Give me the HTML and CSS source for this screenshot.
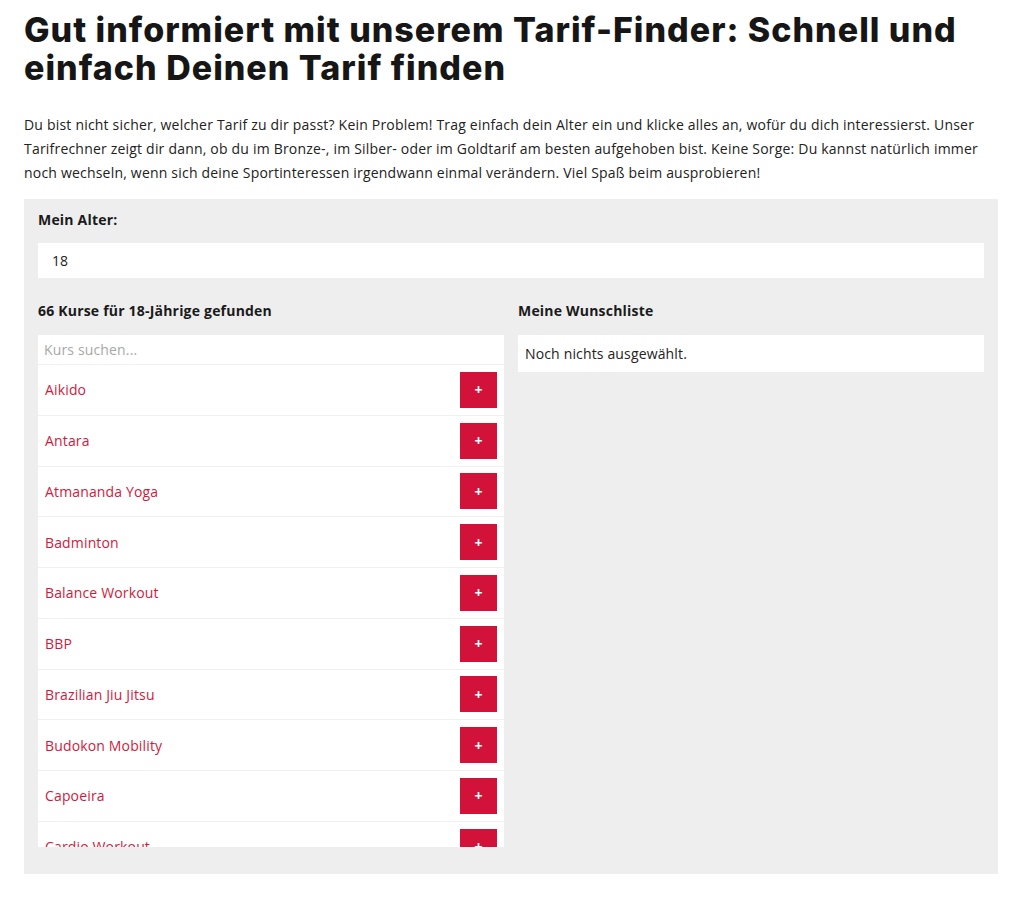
FILE: index.html
```html
<!DOCTYPE html>
<html lang="de">
<head>
  <meta charset="UTF-8">
  <title>Tarif-Finder</title>
  <link rel="stylesheet" href="styles.css">
</head>
<body>
  <div class="page">
    <h1>Gut informiert mit unserem Tarif-Finder: Schnell und einfach Deinen Tarif finden</h1>
    <p class="intro">Du bist nicht sicher, welcher Tarif zu dir passt? Kein Problem! Trag einfach dein Alter ein und klicke alles an, wofür du dich interessierst. Unser Tarifrechner zeigt dir dann, ob du im Bronze-, im Silber- oder im Goldtarif am besten aufgehoben bist. Keine Sorge: Du kannst natürlich immer noch wechseln, wenn sich deine Sportinteressen irgendwann einmal verändern. Viel Spaß beim ausprobieren!</p>

    <div class="finder">
      <label class="label" for="age">Mein Alter:</label>
      <input class="age" type="text" id="age" value="18">

      <div class="columns">
        <div class="col">
          <div class="label">66 Kurse für 18-Jährige gefunden</div>
          <div class="list">
            <input class="search" type="text" placeholder="Kurs suchen...">
            <div class="row"><span>Aikido</span><button>+</button></div>
            <div class="row"><span>Antara</span><button>+</button></div>
            <div class="row"><span>Atmananda Yoga</span><button>+</button></div>
            <div class="row"><span>Badminton</span><button>+</button></div>
            <div class="row"><span>Balance Workout</span><button>+</button></div>
            <div class="row"><span>BBP</span><button>+</button></div>
            <div class="row"><span>Brazilian Jiu Jitsu</span><button>+</button></div>
            <div class="row"><span>Budokon Mobility</span><button>+</button></div>
            <div class="row"><span>Capoeira</span><button>+</button></div>
            <div class="row"><span>Cardio Workout</span><button>+</button></div>
          </div>
        </div>
        <div class="col">
          <div class="label">Meine Wunschliste</div>
          <div class="wish">Noch nichts ausgewählt.</div>
        </div>
      </div>
    </div>
  </div>
</body>
</html>
```

FILE: styles.css
```css
body {
  margin: 0;
  padding: 0;
  font-family: 'Open Sans', sans-serif;
  color: #1a1a1a;
  background-color: #ffffff;
}

.page {
  padding: 0 26px 0 24px;
}

h1 {
  margin: 0;
  padding-top: 11px;
  font-family: 'Inter', sans-serif;
  font-weight: 800;
  font-size: 34px;
  line-height: 38px;
  letter-spacing: 1px;
  color: #161616;
}

.intro {
  margin: 26px 0 14px;
  font-size: 14px;
  line-height: 24px;
  letter-spacing: 0.2px;
  color: #222;
}

.finder {
  background-color: #eeeeee;
  padding: 12px 14px 27px;
}

.label {
  display: block;
  font-weight: 700;
  font-size: 14px;
  line-height: 18px;
  letter-spacing: 0.2px;
  color: #1a1a1a;
}

.age {
  display: block;
  box-sizing: border-box;
  width: 100%;
  height: 35px;
  margin: 14px 0 24px;
  padding: 0 14px;
  border: none;
  font-family: inherit;
  font-size: 14px;
  color: #222;
  background: #fff;
}

.columns {
  display: grid;
  grid-template-columns: 1fr 1fr;
  gap: 14px;
}

.col .label {
  margin-bottom: 15px;
}

.list {
  height: 512px;
  overflow: hidden;
  background: #fff;
}

.search {
  display: block;
  box-sizing: border-box;
  width: 100%;
  height: 30px;
  padding: 0 6px;
  border: none;
  border-bottom: 1px solid #f0f0f0;
  font-family: inherit;
  font-size: 14px;
  letter-spacing: 0.15px;
  background: #fff;
}

.search::placeholder {
  color: #a8a8a8;
}

.row {
  box-sizing: border-box;
  height: 50.75px;
  display: flex;
  justify-content: space-between;
  align-items: center;
  padding: 0 7px 0 7px;
  border-bottom: 1px solid #f0f0f0;
}

.row span {
  color: #cf1a40;
  font-size: 14px;
  letter-spacing: 0.15px;
}

.row button {
  width: 37px;
  height: 36px;
  border: none;
  background-color: #d31239;
  color: #fff;
  font-weight: 700;
  font-size: 14px;
  font-family: inherit;
  padding: 0;
}

.wish {
  background: #fff;
  height: 37px;
  box-sizing: border-box;
  padding: 0 7px;
  display: flex;
  align-items: center;
  font-size: 14px;
  letter-spacing: 0.15px;
  color: #222;
}
```
